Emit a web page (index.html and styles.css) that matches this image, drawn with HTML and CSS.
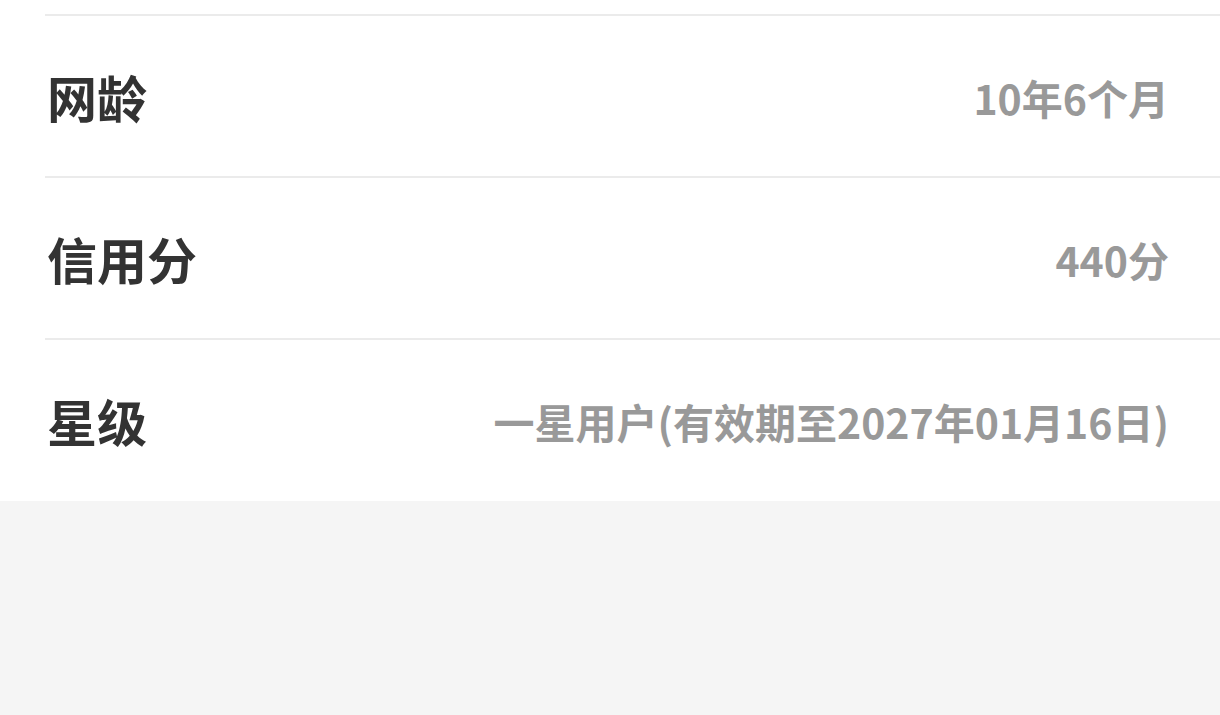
FILE: index.html
```html
<!DOCTYPE html>
<html lang="zh-CN">
<head>
<meta charset="utf-8">
<link rel="stylesheet" href="styles.css">
</head>
<body>
<div class="page">
  <section class="card">
    <div class="row">
      <span class="label">网龄</span>
      <span class="value">10年6个月</span>
    </div>
    <div class="row">
      <span class="label">信用分</span>
      <span class="value">440分</span>
    </div>
    <div class="row">
      <span class="label">星级</span>
      <span class="value">一星用户(有效期至2027年01月16日)</span>
    </div>
  </section>
  <div class="filler"></div>
</div>
</body>
</html>
```

FILE: styles.css
```css
html, body {
  margin: 0;
  padding: 0;
  background: #f5f5f5;
  font-family: "Noto Sans CJK SC", "Noto Sans", sans-serif;
}
.page {
  width: 1220px;
  height: 715px;
  display: flex;
  flex-direction: column;
}
.card {
  background: #ffffff;
  padding-top: 14px;
  padding-bottom: 1px;
}
.row {
  margin-left: 45px;
  padding-right: 51px;
  height: 160px;
  border-top: 2px solid #ebebeb;
  display: flex;
  align-items: center;
  justify-content: space-between;
}
.label {
  font-size: 50px;
  font-weight: 700;
  color: #333333;
  padding-left: 2px;
}
.value {
  font-size: 41px;
  font-weight: 700;
  color: #999999;
  padding-top: 2px;
}
.filler {
  flex: 1;
  background: #f5f5f5;
}
```
